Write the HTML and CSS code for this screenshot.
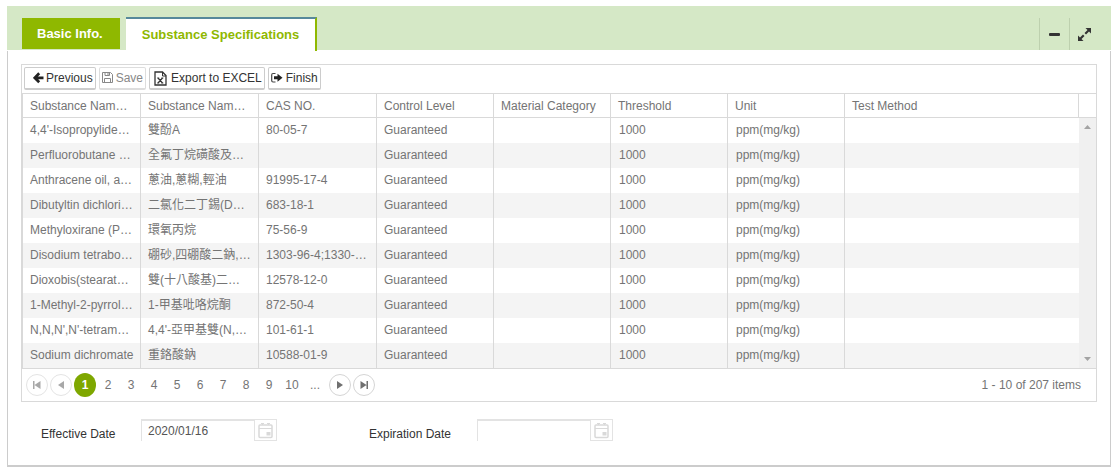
FILE: index.html
```
<!DOCTYPE html>
<html lang="zh-Hant">
<head>
<meta charset="utf-8">
<title>Substance Specifications</title>
<link rel="stylesheet" href="styles.css">
</head>
<body>
<main class="panel">
  <header class="panel-head">
    <nav class="tabs">
      <a class="tab" href="#basic">Basic Info.</a>
      <a class="tab tab-active" href="#specs">Substance Specifications</a>
    </nav>
    <div class="tools">
      <button class="tool" type="button" aria-label="Collapse"><svg width="13" height="13" viewBox="0 0 13 13"><rect x="1" y="5" width="11" height="3" rx="1" fill="#333"/></svg></button>
      <button class="tool" type="button" aria-label="Expand"><svg width="13" height="13" viewBox="0 0 13 13" fill="#333"><path d="M7.500 0H13V5.500L11 3.500 8 6.500 6.500 5 9.500 2zM5.500 13H0V7.500L2 9.500 5 6.500 6.500 8 3.500 11z"/></svg></button>
    </div>
  </header>
  <div class="panel-body">
    <section class="grid">
      <div class="toolbar">
        <button class="btn btn-prev" type="button"><svg width="11" height="12" viewBox="0 0 11 12"><path d="M6.200 1.300L1.800 5.800l4.400 4.500M2.500 5.800H10.500" fill="none" stroke="#222" stroke-width="2.700"/></svg>Previous</button>
        <button class="btn btn-save" type="button" disabled><svg width="11" height="12" viewBox="0 0 11 12" fill="none" stroke="#888"><path d="M.5 .5h8l2 2v8h-10zM3 .5v3h4.500v-3M2.500 10.500V6.500h6v4M6 1v2"/></svg>Save</button>
        <button class="btn btn-excel" type="button"><svg width="13" height="16" viewBox="0 0 13 16" fill="none" stroke="#333"><path d="M1 2h7.500L12 5.500V15H1z" stroke-width="1.300"/><path d="M8.500 2v4H12"/><path d="M4 8l4.500 5M8.500 8L4 13M3.200 8h2M7.300 8h2M3.200 13h2M7.300 13h2" stroke-width="1.200"/></svg>Export to EXCEL</button>
        <button class="btn btn-finish" type="button"><svg width="12" height="12" viewBox="0 0 12 12"><path d="M4.500 1.500H2Q.7 1.500.7 3v5.500Q.7 10 2 10h2.500" fill="none" stroke="#444" stroke-width="1.200"/><path d="M3 4.300h3.500V1.800L11.500 5.800 6.500 9.800V7.300H3z" fill="#222"/></svg>Finish</button>
      </div>
      <div class="data">
        <table class="table">
          <colgroup><col class="c-name"><col class="c-name"><col class="c-name"><col class="c-mid"><col class="c-mid"><col class="c-mid"><col class="c-mid"><col></colgroup>
          <thead><tr><th>Substance Nam…</th><th>Substance Nam…</th><th>CAS NO.</th><th>Control Level</th><th>Material Category</th><th>Threshold</th><th>Unit</th><th>Test Method</th></tr></thead>
          <tbody>
            <tr><td>4,4'-Isopropylide…</td><td>雙酚A</td><td>80-05-7</td><td>Guaranteed</td><td></td><td>1000</td><td>ppm(mg/kg)</td><td></td></tr>
            <tr><td>Perfluorobutane …</td><td>全氟丁烷磺酸及…</td><td></td><td>Guaranteed</td><td></td><td>1000</td><td>ppm(mg/kg)</td><td></td></tr>
            <tr><td>Anthracene oil, a…</td><td>蔥油,蔥糊,輕油</td><td>91995-17-4</td><td>Guaranteed</td><td></td><td>1000</td><td>ppm(mg/kg)</td><td></td></tr>
            <tr><td>Dibutyltin dichlori…</td><td>二氯化二丁錫(D…</td><td>683-18-1</td><td>Guaranteed</td><td></td><td>1000</td><td>ppm(mg/kg)</td><td></td></tr>
            <tr><td>Methyloxirane (P…</td><td>環氧丙烷</td><td>75-56-9</td><td>Guaranteed</td><td></td><td>1000</td><td>ppm(mg/kg)</td><td></td></tr>
            <tr><td>Disodium tetrabo…</td><td>硼砂,四硼酸二鈉,…</td><td>1303-96-4;1330-…</td><td>Guaranteed</td><td></td><td>1000</td><td>ppm(mg/kg)</td><td></td></tr>
            <tr><td>Dioxobis(stearat…</td><td>雙(十八酸基)二…</td><td>12578-12-0</td><td>Guaranteed</td><td></td><td>1000</td><td>ppm(mg/kg)</td><td></td></tr>
            <tr><td>1-Methyl-2-pyrrol…</td><td>1-甲基吡咯烷酮</td><td>872-50-4</td><td>Guaranteed</td><td></td><td>1000</td><td>ppm(mg/kg)</td><td></td></tr>
            <tr><td>N,N,N',N'-tetram…</td><td>4,4'-亞甲基雙(N,…</td><td>101-61-1</td><td>Guaranteed</td><td></td><td>1000</td><td>ppm(mg/kg)</td><td></td></tr>
            <tr><td>Sodium dichromate</td><td>重鉻酸鈉</td><td>10588-01-9</td><td>Guaranteed</td><td></td><td>1000</td><td>ppm(mg/kg)</td><td></td></tr>
          </tbody>
        </table>
        <div class="scroll">
          <div class="scroll-cap"></div>
          <div class="scroll-track">
            <svg width="7" height="4" viewBox="0 0 7 4"><path d="M0 4L3.500 0 7 4z" fill="#a3a3a3"/></svg>
            <svg width="7" height="4" viewBox="0 0 7 4"><path d="M0 0L3.500 4 7 0z" fill="#a3a3a3"/></svg>
          </div>
        </div>
      </div>
      <footer class="pager">
        <button class="round off" type="button" aria-label="First page"><svg width="8" height="8" viewBox="0 0 8 8"><path d="M0 0h1.500v8H0zM7.500 0v8L1.500 4z"/></svg></button>
        <button class="round off" type="button" aria-label="Previous page"><svg width="8" height="8" viewBox="0 0 8 8"><path d="M7 0v8L1 4z"/></svg></button>
        <div class="pages">
          <a class="page page-now" href="#p1">1</a>
          <a class="page" href="#p2">2</a>
          <a class="page" href="#p3">3</a>
          <a class="page" href="#p4">4</a>
          <a class="page" href="#p5">5</a>
          <a class="page" href="#p6">6</a>
          <a class="page" href="#p7">7</a>
          <a class="page" href="#p8">8</a>
          <a class="page" href="#p9">9</a>
          <a class="page" href="#p10">10</a>
          <a class="page" href="#more">...</a>
        </div>
        <button class="round" type="button" aria-label="Next page"><svg width="8" height="8" viewBox="0 0 8 8"><path d="M1 0v8L7 4z"/></svg></button>
        <button class="round" type="button" aria-label="Last page"><svg width="8" height="8" viewBox="0 0 8 8"><path d="M6.500 0H8v8H6.500zM.5 0v8L6.500 4z"/></svg></button>
        <span class="count">1 - 10 of 207 items</span>
      </footer>
    </section>
    <form class="dates">
      <div class="field">
        <label class="label label-start" for="effective">Effective Date</label>
        <div class="picker">
          <input class="date" id="effective" type="text" value="2020/01/16">
          <button class="cal" type="button" aria-label="Pick effective date"><svg width="16" height="17" viewBox="0 0 16 17" fill="none" stroke="#d9d9d9"><rect x="1" y="3" width="13" height="12.500" rx="1" stroke-width="1.500"/><path d="M1 6.500h13M3 1.500h3M9 1.500h3M4.500 1v2M10.500 1v2"/><rect x="8.500" y="10" width="4" height="3.500" fill="#d9d9d9" stroke="none"/></svg></button>
        </div>
      </div>
      <div class="field">
        <label class="label" for="expiration">Expiration Date</label>
        <div class="picker">
          <input class="date" id="expiration" type="text">
          <button class="cal" type="button" aria-label="Pick expiration date"><svg width="16" height="17" viewBox="0 0 16 17" fill="none" stroke="#d9d9d9"><rect x="1" y="3" width="13" height="12.500" rx="1" stroke-width="1.500"/><path d="M1 6.500h13M3 1.500h3M9 1.500h3M4.500 1v2M10.500 1v2"/><rect x="8.500" y="10" width="4" height="3.500" fill="#d9d9d9" stroke="none"/></svg></button>
        </div>
      </div>
    </form>
  </div>
</main>
</body>
</html>
```
FILE: styles.css
```
* { box-sizing: border-box; }
body {
  margin: 0;
  padding: 6px 5px 7px 7px;
  background: #fff;
  color: #747474;
  font: 12px/16px "Liberation Sans", Arial, "Noto Sans CJK TC", sans-serif;
}
button, input { font: inherit; color: inherit; margin: 0; }
button { cursor: pointer; }
svg { display: block; flex: none; }
a { color: inherit; text-decoration: none; }

.panel-head {
  display: flex;
  justify-content: space-between;
  height: 44px;
  background: #d5e8c6;
}
.tabs { display: flex; gap: 6px; padding: 11px 0 0 15px; }
.tab {
  height: 31px;
  margin-top: 1px;
  padding: 8px 17px 0 15px;
  background: #8fb800;
  color: #fff;
  font-size: 13px;
  font-weight: bold;
}
.tab-active {
  height: 34px;
  margin-top: 0;
  padding: 8px 16px 0;
  background: #fff;
  color: #8fb800;
  border-top: 2px solid #57899b;
  border-right: 2px solid #8fb800;
}
.tools { display: flex; padding: 12px 12px 0 0; }
.tool {
  display: flex;
  align-items: center;
  justify-content: center;
  width: 30px;
  padding: 0;
  border: 0;
  border-left: 1px solid #bdd0ae;
  background: none;
}
.panel-body {
  margin-top: 1px;
  padding: 13px;
  border: 1px solid #ccc;
  border-top: 0;
  border-bottom: 2px solid #ccc;
}

.grid { border: 1px solid #d9d9d9; }
.toolbar { display: flex; gap: 3px; padding: 2px 2px 3px; }
.btn {
  display: flex;
  align-items: center;
  height: 23px;
  padding: 0 2px;
  gap: 3px;
  border: 1px solid #ccc;
  border-bottom-width: 2px;
  border-radius: 2px;
  background: #fff;
  color: #333;
  white-space: nowrap;
}
.btn-prev { padding-left: 8px; gap: 2px; }
.btn-save { color: #888; border-color: #ddd; }
.btn-excel { padding-left: 4px; gap: 4px; }

.data {
  display: flex;
  border-top: 1px solid #d9d9d9;
  border-bottom: 1px solid #d9d9d9;
}
.table {
  flex: 1;
  min-width: 0;
  width: 100%;
  table-layout: fixed;
  border-collapse: separate;
  border-spacing: 0;
  border-left: 1px solid #d9d9d9;
}
.c-name { width: 118px; }
.c-mid { width: 117px; }
.table th, .table td {
  height: 25px;
  padding: 0 5px 2px 7px;
  border-right: 1px solid #d9d9d9;
  font-weight: normal;
  text-align: left;
  line-height: 16px;
  white-space: nowrap;
  overflow: hidden;
}
.table th { height: 24px; padding-bottom: 0; border-bottom: 1px solid #d9d9d9; }
.table td:last-child { border-right: 0; }
.table td:nth-child(n+5) { padding-left: 8px; }
.table tbody tr:nth-child(even) { background: #f4f4f4; }
.scroll { display: flex; flex-direction: column; width: 17px; }
.scroll-cap { height: 24px; border-bottom: 1px solid #d9d9d9; }
.scroll-track {
  flex: 1;
  display: flex;
  flex-direction: column;
  justify-content: space-between;
  align-items: center;
  padding: 7px 0;
  background: #f0f0f0;
}

.pager { display: flex; align-items: center; gap: 2px; height: 32px; padding: 0 15px 1px 4px; }
.round {
  display: flex;
  align-items: center;
  justify-content: center;
  width: 22px;
  height: 22px;
  padding: 0;
  border: 1px solid #d5d5d5;
  border-radius: 50%;
  background: #fff;
  fill: #707070;
}
.off { border-color: #e4e4e4; fill: #a8a8a8; }
.pages { display: flex; gap: 1px; padding-right: 1px; }
.page { width: 22px; height: 24px; line-height: 24px; text-align: center; }
.page-now { border-radius: 50%; background: #7ea700; color: #fff; font-weight: bold; }
.count { margin-left: auto; }

.dates { display: flex; gap: 92px; padding: 17px 0 10px 20px; }
.field { display: flex; }
.label { width: 108px; padding-top: 7px; color: #333; white-space: nowrap; }
.label-start { width: 100px; }
.picker { display: flex; }
.date {
  width: 113px;
  height: 22px;
  padding: 0 6px;
  border: solid #e3e3e3;
  border-width: 2px 0 0 1px;
  border-radius: 0;
  background: #fff;
  color: #555;
}
.cal {
  display: flex;
  align-items: center;
  justify-content: center;
  width: 23px;
  height: 22px;
  padding: 0;
  border: 1px solid #e3e3e3;
  background: #fff;
}
```
